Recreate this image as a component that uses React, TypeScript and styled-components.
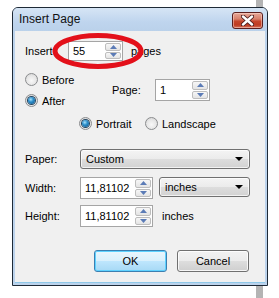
import React from "react";
import styled, { createGlobalStyle } from "styled-components";

const Global = createGlobalStyle`
  html, body { margin: 0; padding: 0; background: #ffffff; }
  body { font-family: "Liberation Sans", Arial, sans-serif; font-size: 11px; color: #000; }
  * { box-sizing: border-box; }
`;

const Page = styled.div`
  position: relative;
  width: 279px;
  height: 298px;
  padding: 7px 0 0 12px;
  overflow: hidden;
  background: #fff;
`;

const BackEdge = styled.div`
  position: absolute;
  left: 256px;
  top: 0;
  width: 7px;
  height: 298px;
  background: #b4b4b4;
`;

const Dialog = styled.div`
  position: relative;
  z-index: 1;
  width: 256px;
  height: 279px;
  border: 1px solid #1e2a36;
  border-radius: 6px 6px 0 0;
  background: #bcd3ec;
  display: flex;
  flex-direction: column;
  overflow: hidden;
`;

const TitleBar = styled.div`
  height: 23px;
  display: flex;
  align-items: flex-start;
  justify-content: space-between;
  padding: 0 4px 0 6px;
  background: linear-gradient(#d6e5f5, #bfd5ee 60%, #bad1ea);
`;

const Title = styled.div`
  font-family: "Liberation Sans", Arial, sans-serif;
  font-size: 12px;
  line-height: 23px;
  color: #111;
`;

const CloseButton = styled.div`
  margin-top: 4px;
  width: 31px;
  height: 17px;
  border: 1px solid #5a1f1f;
  border-radius: 3px;
  background: linear-gradient(#e6a899 0%, #d7806c 40%, #c6452b 55%, #be3b22 80%, #d6735c 100%);
  display: flex;
  align-items: center;
  justify-content: center;
  box-shadow: inset 0 0 0 1px rgba(255, 220, 210, 0.5);
`;

const Body = styled.div`
  flex: 1;
  margin: 0 2px 2px 2px;
  background: #f0f0f0;
  border-bottom: 1px solid #8fc8e8;
  padding: 10px 10px 0 10px;
  position: relative;
  display: flex;
  flex-direction: column;
`;

const Row = styled.div<{ $top?: number; $left?: number }>`
  display: flex;
  align-items: center;
  margin-top: ${(p) => p.$top ?? 0}px;
  margin-left: ${(p) => p.$left ?? 0}px;
`;

const Label = styled.span<{ $w?: number }>`
  display: inline-block;
  width: ${(p) => (p.$w ? `${p.$w}px` : "auto")};
  flex: none;
  white-space: nowrap;
`;

const SpinBox = styled.div<{ $w: number; $h: number }>`
  width: ${(p) => p.$w}px;
  height: ${(p) => p.$h}px;
  border: 1px solid #a5a5a5;
  background: #fff;
  display: flex;
  align-items: stretch;
  flex: none;
`;

const SpinText = styled.div`
  flex: 1;
  padding-left: 4px;
  display: flex;
  align-items: center;
  font-size: 11px;
`;

const SpinButtons = styled.div`
  width: 17px;
  display: flex;
  flex-direction: column;
  padding: 1px 1px 1px 0;
  gap: 1px;
`;

const SpinBtn = styled.div`
  flex: 1;
  border: 1px solid #bdbdbd;
  border-radius: 2px;
  background: linear-gradient(#f7f7f7, #e4e4e4);
  display: flex;
  align-items: center;
  justify-content: center;
`;

const RadioColumn = styled.div`
  width: 87px;
  display: flex;
  flex-direction: column;
`;

const RadioItem = styled.label<{ $w?: number }>`
  display: flex;
  align-items: center;
  height: 21px;
  gap: 4px;
  width: ${(p) => (p.$w ? `${p.$w}px` : "auto")};
`;

const RadioCircle = styled.span<{ $checked?: boolean }>`
  position: relative;
  width: 13px;
  height: 13px;
  border-radius: 50%;
  border: 1px solid #8a8c8e;
  background: radial-gradient(circle at 50% 60%, #f8f8f8 0%, #e6e6e6 55%, #cfcfcf 100%);
  flex: none;
  display: flex;
  align-items: center;
  justify-content: center;
  &::after {
    content: "";
    display: ${(p) => (p.$checked ? "block" : "none")};
    width: 7px;
    height: 7px;
    border-radius: 50%;
    background: radial-gradient(circle at 40% 35%, #a9e2fb 0%, #2d8fcb 40%, #0c4f82 100%);
    box-shadow: 0 0 0 1px #23445f;
  }
`;

const PageGroup = styled.div`
  display: flex;
  align-items: center;
`;

const Combo = styled.div<{ $w: number }>`
  width: ${(p) => p.$w}px;
  height: 20px;
  border: 1px solid #707070;
  border-radius: 3px;
  background: linear-gradient(#f4f4f4 0%, #ebebeb 50%, #dddddd 51%, #d2d2d2 100%);
  box-shadow: inset 0 0 0 1px rgba(255, 255, 255, 0.7);
  display: flex;
  align-items: center;
  justify-content: space-between;
  padding: 0 6px 0 5px;
  flex: none;
`;

const Caret = styled.span`
  width: 0;
  height: 0;
  border-left: 4px solid transparent;
  border-right: 4px solid transparent;
  border-top: 4px solid #000;
`;

const ButtonRow = styled.div`
  display: flex;
  margin-top: 23px;
  margin-left: 69px;
  gap: 10px;
`;

const Button = styled.div<{ $primary?: boolean; $w: number }>`
  width: ${(p) => p.$w}px;
  height: 22px;
  border-radius: 3px;
  display: flex;
  align-items: center;
  justify-content: center;
  border: 1px solid ${(p) => (p.$primary ? "#3c7fb1" : "#707070")};
  background: ${(p) =>
    p.$primary
      ? "linear-gradient(#eaf6fd 0%, #d9f0fc 50%, #bee6fd 51%, #a7d9f5 100%)"
      : "linear-gradient(#f2f2f2 0%, #ebebeb 50%, #dddddd 51%, #cfcfcf 100%)"};
  box-shadow: inset 0 0 0 1px ${(p) => (p.$primary ? "#5fd2ff" : "rgba(255,255,255,0.8)")};
`;

const Annotation = styled.svg`
  position: absolute;
  left: 37px;
  top: 2px;
  overflow: visible;
  pointer-events: none;
`;

const Arrow = ({ up }: { up?: boolean }) => (
  <svg width="7" height="4" viewBox="0 0 7 4">
    {up ? (
      <polygon points="0,4 7,4 3.5,0" fill="#5b7bb6" />
    ) : (
      <polygon points="0,0 7,0 3.5,4" fill="#5b7bb6" />
    )}
  </svg>
);

const Spin = ({ value, w, h }: { value: string; w: number; h: number }) => (
  <SpinBox $w={w} $h={h}>
    <SpinText>{value}</SpinText>
    <SpinButtons>
      <SpinBtn>
        <Arrow up />
      </SpinBtn>
      <SpinBtn>
        <Arrow />
      </SpinBtn>
    </SpinButtons>
  </SpinBox>
);

export default function App() {
  return (
    <Page>
      <Global />
      <BackEdge />
      <Dialog>
        <TitleBar>
          <Title>Insert Page</Title>
          <CloseButton>
            <svg width="13" height="11" viewBox="0 0 13 11">
              <path
                d="M2 1.5 L11 9.5 M11 1.5 L2 9.5"
                stroke="#4a1c1c"
                strokeWidth="4.2"
                strokeLinecap="round"
              />
              <path
                d="M2 1.5 L11 9.5 M11 1.5 L2 9.5"
                stroke="#ffffff"
                strokeWidth="2.4"
                strokeLinecap="round"
              />
            </svg>
          </CloseButton>
        </TitleBar>
        <Body>
          <Row>
            <Label $w={43}>Insert</Label>
            <Spin value="55" w={55} h={20} />
            <Label style={{ marginLeft: 8 }}>pages</Label>
          </Row>
          <Row $top={8}>
            <RadioColumn>
              <RadioItem>
                <RadioCircle />
                Before
              </RadioItem>
              <RadioItem>
                <RadioCircle $checked />
                After
              </RadioItem>
            </RadioColumn>
            <PageGroup>
              <Label $w={43}>Page:</Label>
              <Spin value="1" w={55} h={22} />
            </PageGroup>
          </Row>
          <Row $top={2} $left={54}>
            <RadioItem $w={66}>
              <RadioCircle $checked />
              Portrait
            </RadioItem>
            <RadioItem>
              <RadioCircle />
              Landscape
            </RadioItem>
          </Row>
          <Row $top={15}>
            <Label $w={55}>Paper:</Label>
            <Combo $w={170}>
              Custom
              <Caret />
            </Combo>
          </Row>
          <Row $top={8} style={{ alignItems: "flex-start" }}>
            <Label $w={55} style={{ lineHeight: "22px" }}>Width:</Label>
            <Spin value="11,81102" w={73} h={22} />
            <Combo $w={91} style={{ marginLeft: 6 }}>
              inches
              <Caret />
            </Combo>
          </Row>
          <Row $top={6}>
            <Label $w={55}>Height:</Label>
            <Spin value="11,81102" w={73} h={22} />
            <Label style={{ marginLeft: 9 }}>inches</Label>
          </Row>
          <ButtonRow>
            <Button $primary $w={73}>OK</Button>
            <Button $w={72}>Cancel</Button>
          </ButtonRow>
          <Annotation width="92" height="36" viewBox="0 0 92 36">
            <ellipse cx="46" cy="18" rx="43" ry="15.5" fill="none" stroke="#e3101a" strokeWidth="5" />
          </Annotation>
        </Body>
      </Dialog>
    </Page>
  );
}
